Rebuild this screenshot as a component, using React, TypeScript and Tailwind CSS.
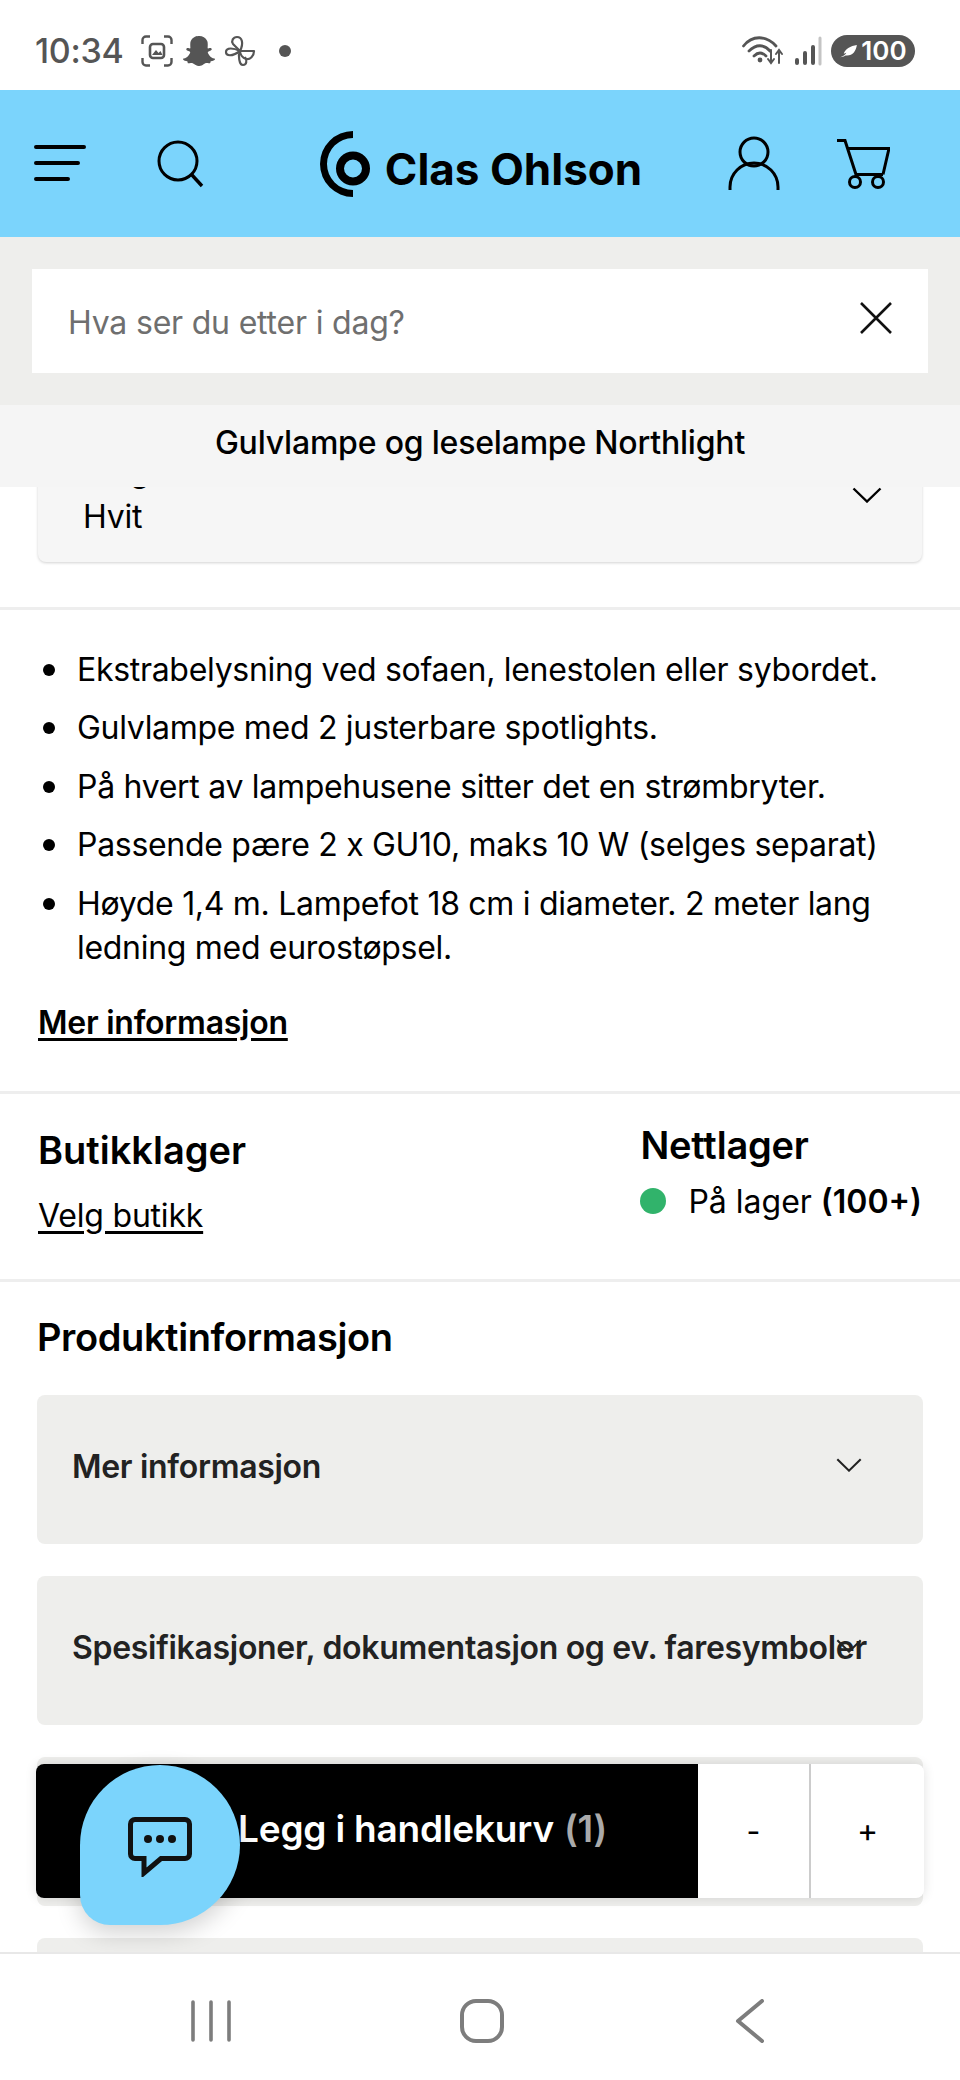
import { FaSnapchatGhost } from "react-icons/fa";

const bullets = [
  "Ekstrabelysning ved sofaen, lenestolen eller sybordet.",
  "Gulvlampe med 2 justerbare spotlights.",
  "På hvert av lampehusene sitter det en strømbryter.",
  "Passende pære 2 x GU10, maks 10 W (selges separat)",
  "Høyde 1,4 m. Lampefot 18 cm i diameter. 2 meter lang ledning med eurostøpsel.",
];

function Chevron({ className }: { className: string }) {
  return (
    <svg viewBox="0 0 30 16" className={className} fill="none" stroke="currentColor" strokeWidth="2.4">
      <path d="M1.5 1.5 15 14.5 28.5 1.5" />
    </svg>
  );
}

function StatusBar() {
  return (
    <div className="flex h-[90px] items-center bg-white pl-[35px] pr-[45px] pt-[12px] text-[#555]">
      <span className="w-[106px] text-[34px] font-medium leading-none tracking-[-0.3px]">10:34</span>
      <svg viewBox="0 0 32 32" className="h-8 w-8" fill="none" stroke="currentColor" strokeWidth="2.4">
        <path d="M1.5 9V5a3.5 3.5 0 0 1 3.5-3.5h4M23 1.5h4A3.5 3.5 0 0 1 30.5 5v4M30.5 23v4a3.5 3.5 0 0 1-3.5 3.5h-4M9 30.5H5A3.5 3.5 0 0 1 1.5 27v-4" />
        <rect x="9" y="9" width="14" height="14" rx="3" strokeWidth="2.6" />
        <path d="m11 20 4-5 2.5 3 2-2 2 4z" fill="currentColor" stroke="none" />
      </svg>
      <FaSnapchatGhost className="ml-[10px] h-8 w-8" />
      <svg viewBox="0 0 32 32" className="ml-[9px] h-8 w-8" fill="none" stroke="currentColor" strokeWidth="2.2" strokeLinejoin="round">
        <path d="M16 16 9 9c-2-3 0-7 4-7 5 0 7 6 3 14Z" />
        <path d="M16 16h14c0 5-4 9-8 8-3-1-6-4-6-8Z" />
        <path d="M16 16c-2 4-1 14 3 14 4 0 4-5 2-8" />
        <path d="M16 16C10 13 2 12 2 17c0 4 6 5 14-1Z" />
      </svg>
      <span className="ml-[23px] h-3 w-3 rounded-full bg-[#555]" />
      <div className="flex-1" />
      <svg viewBox="0 0 42 30" className="h-[30px] w-[42px]" fill="none" stroke="currentColor" strokeWidth="2.8" strokeLinecap="round">
        <path d="M1.5 10C10-1 24-1 34 10M7 15c7-7 15-7 21 0M12 20c4-4 8-4 12 0" />
        <circle cx="18" cy="24" r="2.4" fill="currentColor" stroke="none" />
        <path d="M29 14v12m-3-3 3 4 3-4M37 27V15m-3 3 3-4 3 4" strokeWidth="2" />
      </svg>
      <svg viewBox="0 0 28 30" className="ml-[10px] h-[30px] w-7" fill="none" strokeWidth="4" strokeLinecap="round">
        <path d="M3 27v-3M11 27V17M19 27V11" stroke="#555" />
        <path d="M26 28V2" stroke="#c4c4c4" strokeWidth="3" />
      </svg>
      <div className="ml-[9px] flex h-8 w-[84px] items-center justify-center gap-[2px] rounded-full bg-[#555] text-[26px] font-semibold leading-none text-white">
        <svg viewBox="0 0 20 16" className="h-[14px] w-5" fill="#fff">
          <path d="M0 15c4-1 6-3 7-5l-3 1c1-5 8-9 15-10-1 7-5 13-13 12-2 1-4 2-6 2Z" />
        </svg>
        <span>100</span>
      </div>
    </div>
  );
}

function Header() {
  return (
    <header className="flex h-[147px] items-center justify-between bg-[#7bd4fc] pl-[34px] pr-[70px] text-black">
      <div className="flex items-center gap-[70px]">
        <svg viewBox="0 0 52 38" className="h-[38px] w-[52px]" fill="none" stroke="currentColor" strokeWidth="4" strokeLinecap="round">
          <path d="M2 2h48M2 18h42M2 34h32" />
        </svg>
        <svg viewBox="0 0 48 48" className="h-12 w-12" fill="none" stroke="currentColor" strokeWidth="3">
          <circle cx="22" cy="21" r="19" />
          <path d="m36 35 10 11" strokeWidth="3.4" />
        </svg>
      </div>
      <div className="ml-[30px] flex items-center">
        <svg viewBox="321 128 52 70" className="h-[70px] w-[52px]">
          <path d="M354 130A33 33 0 0 0 354 196V189A26 26 0 0 1 354 137Z" fill="currentColor" />
          <circle cx="354" cy="167.500" r="13" fill="none" stroke="currentColor" strokeWidth="8" />
        </svg>
        <span className="ml-[13px] pt-[10px] text-[44px] font-bold leading-none">Clas Ohlson</span>
      </div>
      <div className="flex items-center gap-[56px]">
        <svg viewBox="0 0 52 56" className="h-14 w-[52px]" fill="none" stroke="currentColor" strokeWidth="3">
          <circle cx="26" cy="16" r="14" />
          <path d="M2 54v-3a24 24 0 0 1 48 0v3" />
        </svg>
        <svg viewBox="0 0 54 50" className="h-[50px] w-[54px]" fill="none" stroke="currentColor" strokeWidth="3">
          <path d="M1 1.500h8l11 34h27" />
          <path d="M11 9.500h42l-6 26" />
          <circle cx="19" cy="43" r="5.500" />
          <circle cx="42" cy="43" r="5.500" />
        </svg>
      </div>
    </header>
  );
}

function Accordion({ title }: { title: string }) {
  return (
    <div className="relative flex h-[149px] items-center rounded-lg bg-[#eeeeec] pb-[4px] pl-[35px] text-[32px] font-semibold tracking-[-0.3px] text-[#222]">
      <span className="whitespace-nowrap">{title}</span>
      <Chevron className="absolute left-[799px] top-[63px] h-[14px] w-[26px] text-[#222]" />
    </div>
  );
}

function BuyBar() {
  return (
    <div className="flex h-[149px] items-center rounded-lg bg-[#eeeeec]">
      <div className="mx-[-1px] flex h-[134px] flex-1 overflow-hidden rounded-lg bg-white shadow-[0_0_12px_rgba(0,0,0,0.12)]">
        <div className="flex w-[662px] items-center bg-black pb-[4px] pl-[202px] text-[37px] font-semibold tracking-[-0.2px] text-white">
          Legg i handlekurv <span className="ml-[10px] text-[#aaa]">(1)</span>
        </div>
        <div className="flex w-[113px] items-center justify-center border-r-2 border-[#ccc] text-[30px] text-black">-</div>
        <div className="flex flex-1 items-center justify-center text-[32px] text-black">+</div>
      </div>
    </div>
  );
}

export default function App() {
  return (
    <div className="relative flex h-[2080px] w-[960px] flex-col overflow-hidden bg-white font-['Inter',sans-serif] text-black">
      <StatusBar />
      <Header />
      <div className="z-10 bg-[#eeeeec] px-8 py-8">
        <div className="flex h-[104px] items-center justify-between bg-white pl-9 pr-[35px]">
          <span className="pt-[3px] text-[32px] tracking-[-0.2px] text-[#6f6f6f]">Hva ser du etter i dag?</span>
          <svg viewBox="0 0 34 34" className="mb-[6px] h-[34px] w-[34px]" fill="none" stroke="#111" strokeWidth="2.6">
            <path d="m2 2 30 30M32 2 2 32" />
          </svg>
        </div>
      </div>
      <div className="z-10 flex h-[82px] items-center justify-center bg-[#f5f5f5] pb-[6px] text-[32px] font-medium tracking-[-0.2px]">
        Gulvlampe og leselampe Northlight
      </div>

      <main className="relative mt-[-60px] flex-1 overflow-hidden">
        <div className="mx-[38px] h-[135px] rounded-lg bg-[#f6f6f6] pl-[45px] pr-[40px] pt-[22px] text-[32px] leading-[44px] tracking-[-0.2px] shadow-[0_1px_3px_rgba(0,0,0,0.18)]">
          <div className="flex items-start justify-between">
            <div>
              <div>Farge</div>
              <div className="mt-[2px]">Hvit</div>
            </div>
            <Chevron className="mt-[38px] h-[16px] w-[30px]" />
          </div>
        </div>

        <div className="mt-[45px] border-t-[3px] border-[#eeeeee] pb-[46px] pl-[38px] pr-[38px] pt-[38px]">
          <ul className="text-[32px] leading-[44px] tracking-[-0.3px]">
            {bullets.map((b) => (
              <li key={b} className="mb-[14.4px] flex">
                <span className="ml-[5px] mr-[22px] mt-[16px] h-3 w-3 shrink-0 rounded-full bg-black" />
                <span>{b}</span>
              </li>
            ))}
          </ul>
          <a className="mt-[31px] block text-[32px] font-semibold leading-[44px] tracking-[-0.25px] underline underline-offset-4">
            Mer informasjon
          </a>
        </div>

        <div className="flex h-[191px] justify-between border-y-[3px] border-[#eeeeee] px-[38px]">
          <div className="pt-[34px]">
            <h3 className="text-[38px] font-semibold leading-[44px]">Butikklager</h3>
            <a className="mt-[22px] block text-[32px] leading-[44px] tracking-[-0.2px] underline underline-offset-4">Velg butikk</a>
          </div>
          <div className="pt-[29px]">
            <h3 className="text-[38px] font-semibold leading-[44px] tracking-[-0.2px]">Nettlager</h3>
            <div className="mt-[13px] flex items-center text-[32px] leading-[44px]">
              <span className="mb-[2px] mr-[22px] h-[26px] w-[26px] rounded-full bg-[#31b36b]" />
              <span>På lager&nbsp;<b className="font-semibold">(100+)</b></span>
            </div>
          </div>
        </div>

        <div className="px-[37px] pt-[32px]">
          <h2 className="mb-[35px] text-[38px] font-semibold leading-[46px] tracking-[-0.4px]">Produktinformasjon</h2>
          <div className="flex flex-col gap-8">
            <Accordion title="Mer informasjon" />
            <Accordion title="Spesifikasjoner, dokumentasjon og ev. faresymboler" />
            <BuyBar />
            <div className="h-[149px] rounded-lg bg-[#eeeeec]" />
          </div>
        </div>

        {/* chat button floats over the buy bar */}
        <div className="absolute left-[80px] top-[1338px] flex h-[160px] w-[160px] items-center justify-center rounded-[80px_80px_80px_30px] bg-[#7bd4fc] pt-[4px] shadow-[0_8px_24px_rgba(0,0,0,0.18)]">
          <svg viewBox="0 0 64 60" className="h-[60px] w-[64px]" fill="none" stroke="#111" strokeWidth="5">
            <path d="M7 2.500h50a4.500 4.500 0 0 1 4.500 4.500v30a4.500 4.500 0 0 1-4.500 4.500H33L16 56V41.500H7A4.500 4.500 0 0 1 2.500 37V7A4.500 4.500 0 0 1 7 2.500Z" />
            <circle cx="20" cy="22" r="4" fill="#111" stroke="none" />
            <circle cx="32" cy="22" r="4" fill="#111" stroke="none" />
            <circle cx="44" cy="22" r="4" fill="#111" stroke="none" />
          </svg>
        </div>
      </main>

      <nav className="z-10 flex h-[128px] items-center border-t-2 border-[#e8e8e8] bg-white text-[#7d7d7d]">
        <div className="flex w-full items-center justify-between pl-[191px] pr-[195px] pt-[8px]">
          <svg viewBox="0 0 40 42" className="h-[42px] w-10" fill="none" stroke="currentColor" strokeWidth="3.600" strokeLinecap="round">
            <path d="M2 2v38M20 2v38M38 2v38" />
          </svg>
          <svg viewBox="0 0 44 44" className="mr-[3px] h-11 w-11" fill="none" stroke="currentColor" strokeWidth="4">
            <rect x="2" y="2" width="40" height="40" rx="14" />
          </svg>
          <svg viewBox="0 0 30 44" className="h-11 w-[30px]" fill="none" stroke="currentColor" strokeWidth="4" strokeLinecap="round" strokeLinejoin="round">
            <path d="M27 2 3 22l24 20" />
          </svg>
        </div>
      </nav>
    </div>
  );
}
